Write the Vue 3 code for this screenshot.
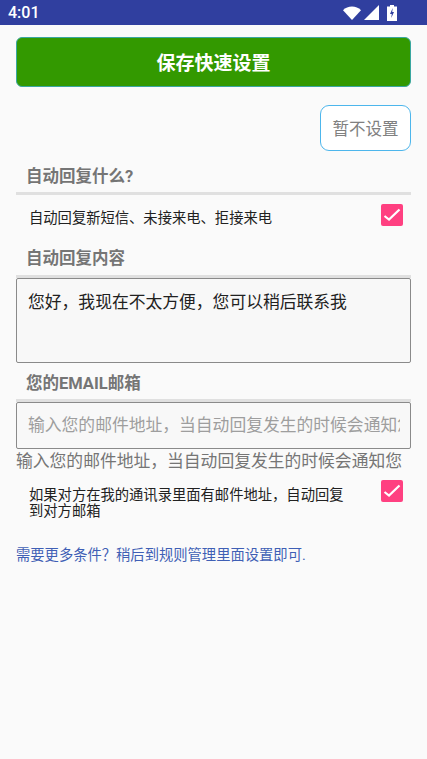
<script setup>
const sections = {
  reply: '自动回复新短信、未接来电、拒接来电',
  mail: '如果对方在我的通讯录里面有邮件地址\uFF0C自动回复到对方邮箱',
  greeting: '您好\uFF0C我现在不太方便\uFF0C您可以稍后联系我',
  notify: '输入您的邮件地址\uFF0C当自动回复发生的时候会通知您',
  more: '需要更多条件\uFF1F稍后到规则管理里面设置即可.'
}
</script>

<template>
  <div class="page">
    <header class="status">
      <span class="time">4:01</span>
      <div class="status-icons">
        <svg width="18" height="14" viewBox="0 0 18 14"><path d="M0 4.200C2.400 1.800 5.600.6 9 .6s6.600 1.200 9 3.600L9 14z" fill="#fff"/></svg>
        <svg width="15" height="15" viewBox="0 0 15 15"><path d="M15 0v15H0z" fill="#fff"/></svg>
        <svg class="battery" width="10" height="16" viewBox="0 0 10 16"><path d="M3 0h4v1.500h3V16H0V1.500h3z" fill="#fff"/><path d="M5.700 3 3 9h1.800L4.200 13 7 7H5.200z" fill="#303f9f"/></svg>
      </div>
    </header>

    <main class="content">
      <button class="save">保存快速设置</button>
      <div class="skip-row"><button class="skip">暂不设置</button></div>

      <h2 class="title first">自动回复什么?</h2>
      <div class="rule"></div>
      <div class="check-row single">
        <span class="check-text">{{ sections.reply }}</span>
        <span class="checkbox"><svg width="22" height="22" viewBox="0 0 22 22"><path d="M3.500 12 8 15.500 18.500 5.500" fill="none" stroke="#fff" stroke-width="2.200"/></svg></span>
      </div>

      <h2 class="title second">自动回复内容</h2>
      <div class="rule"></div>
      <div class="field area">{{ sections.greeting }}</div>

      <h2 class="title third">您的EMAIL邮箱</h2>
      <div class="rule"></div>
      <div class="field input"><span class="placeholder">{{ sections.notify }}</span></div>
      <p class="hint">{{ sections.notify }}</p>
      <div class="check-row double">
        <span class="check-text wrap">{{ sections.mail }}</span>
        <span class="checkbox"><svg width="22" height="22" viewBox="0 0 22 22"><path d="M3.500 12 8 15.500 18.500 5.500" fill="none" stroke="#fff" stroke-width="2.200"/></svg></span>
      </div>
      <p class="more">{{ sections.more }}</p>
    </main>
  </div>
</template>

<style>
html, body { margin: 0; background: #fafafa; }
</style>

<style scoped>
.page {
  width: 427px;
  height: 759px;
  overflow: hidden;
  background: #fafafa;
  font-family: Roboto, "Noto Sans CJK SC", sans-serif;
}
.status {
  height: 25px;
  background: #303f9f;
  display: flex;
  align-items: center;
  justify-content: space-between;
  padding: 0 30px 0 8px;
  color: #fff;
}
.time { font-size: 16px; font-weight: 500; }
.status-icons { display: flex; align-items: center; gap: 3px; }
.battery { margin-left: 5px; }
.content { padding: 12px 16px 0; display: flex; flex-direction: column; }
button { font-family: inherit; padding: 0; }
.save {
  height: 50px;
  background: #339900;
  border: 1px solid #3aa7a0;
  border-radius: 6px;
  color: #fff;
  font-size: 19px;
  font-weight: 700;
  padding-bottom: 2px;
}
.skip-row { display: flex; justify-content: flex-end; margin-top: 18px; }
.skip {
  width: 91px;
  height: 46px;
  background: #fff;
  border: 1.500px solid #4db6ec;
  border-radius: 9px;
  color: #808080;
  font-size: 16.500px;
}
.title {
  margin: 0;
  padding-left: 10px;
  font-size: 16.500px;
  line-height: 22px;
  font-weight: 700;
  color: #757575;
}
.title.first { margin-top: 15px; }
.title.second { margin-top: 21px; }
.title.third { margin-top: 10px; }
.rule { height: 3px; background: #e0e0e0; margin-top: 4px; }
.title.second + .rule { margin-top: 5px; }
.check-row { display: flex; justify-content: space-between; padding: 0 8px 0 13px; align-items: flex-start; }
.check-row.single { margin-top: 9px; }
.check-row.double { margin-top: 7px; }
.check-text { font-size: 14.300px; line-height: 18px; color: #212121; }
.single .check-text { padding-top: 5px; }
.check-text.wrap { width: 320px; line-height: 16px; padding-top: 7px; }
.checkbox { width: 22px; height: 22px; background: #ff4081; border-radius: 2px; display: block; }
.checkbox svg { display: block; }
.field {
  box-sizing: border-box;
  border: 1px solid #8a8a8a;
  border-radius: 2px;
  background: #f8f8f8;
  padding: 0 10px 0 11px;
  font-size: 16.800px;
  color: #212121;
  white-space: nowrap;
  overflow: hidden;
}
.area { height: 85px; padding-top: 11px; line-height: 24px; }
.input { height: 47px; line-height: 45px; }
.placeholder { color: #9e9e9e; display: block; overflow: hidden; }
.hint { margin: 0; font-size: 16.800px; line-height: 24px; color: #757575; white-space: nowrap; }
.more { margin: 27px 0 0; font-size: 14.300px; line-height: 18px; color: #3f5fb5; }
</style>
